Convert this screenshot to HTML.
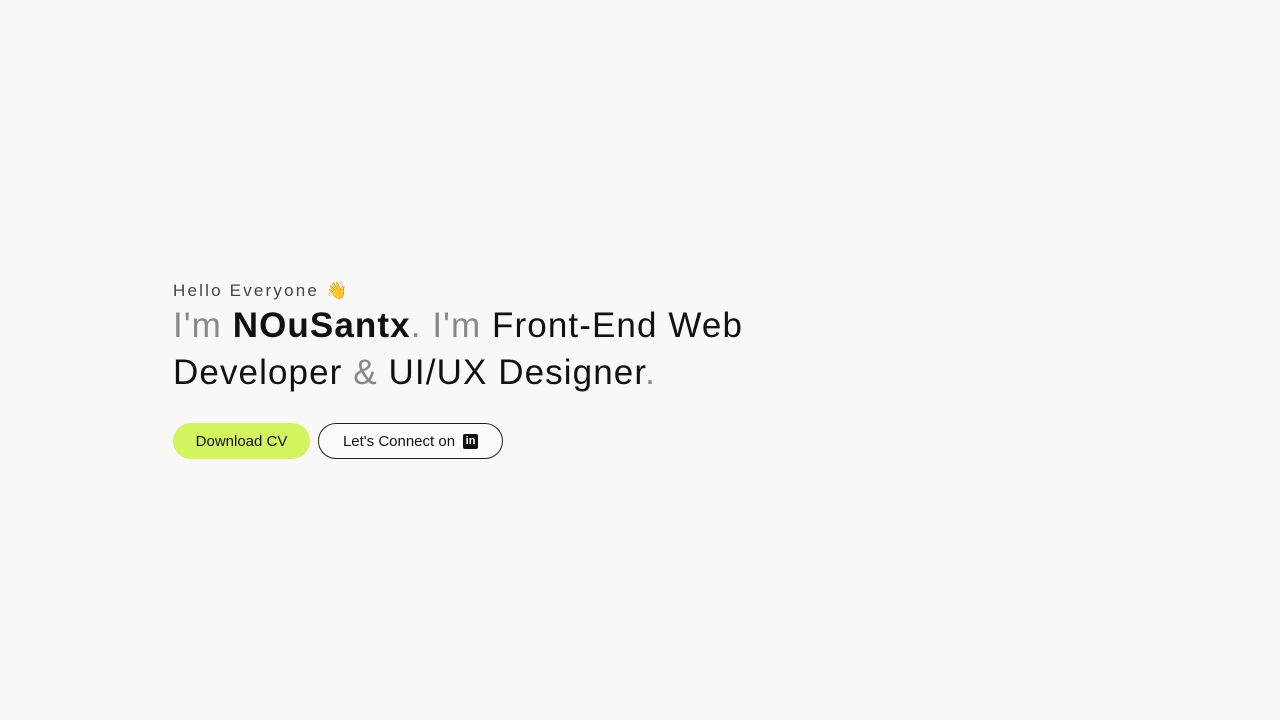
<!DOCTYPE html>
<html><head><meta charset="utf-8"><style>
html,body{margin:0;padding:0;background:#f8f8f6;width:1280px;height:720px;overflow:hidden;font-family:"Liberation Sans",sans-serif;color:#111;}
.hello{position:absolute;left:173px;top:276px;font-size:17px;letter-spacing:2.2px;color:#444;}
h1{position:absolute;left:173px;top:302px;margin:0;font-weight:400;font-size:35px;line-height:47px;letter-spacing:1.1px;white-space:nowrap;}
.g{color:#888}
b{font-weight:700}
.btn{position:absolute;top:423px;height:36px;border-radius:18px;box-sizing:border-box;font-size:15px;display:flex;align-items:center;justify-content:center;}
.b1{left:173px;width:137px;background:#d3f45e;}
.b2{left:318px;width:185px;border:1.3px solid #222;background:#fbfbf9;}
.li{display:inline-block;width:15px;height:15px;background:#111;color:#fff;font-size:11px;font-weight:700;line-height:15px;text-align:center;border-radius:2px;margin-left:8px;}
</style></head><body>
<div class="hello">Hello Everyone <span style="font-family:'Noto Sans CJK JP',sans-serif">👋</span></div>
<h1><span class="g">I'm</span> <b>NOuSantx</b><span class="g">. I'm</span> Front-End Web<br>Developer <span class="g">&amp;</span> UI/UX Designer<span class="g">.</span></h1>
<div class="btn b1">Download CV</div>
<div class="btn b2">Let's Connect on<span class="li">in</span></div>
</body></html>
